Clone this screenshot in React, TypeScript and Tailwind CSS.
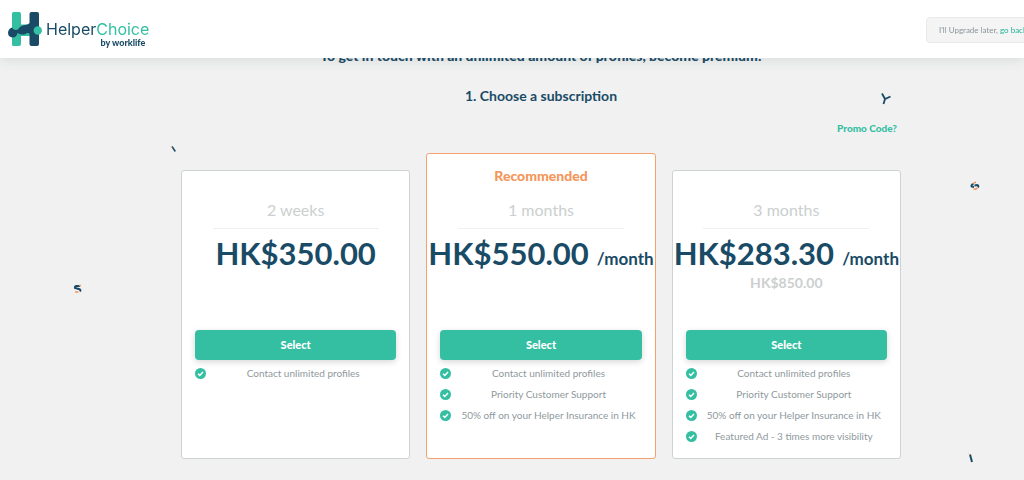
import clsx from 'clsx';

type Plan = {
  id: string;
  duration: string;
  price: string;
  monthly?: boolean;
  total?: string;
  recommended?: boolean;
  features: string[];
};

const plans: Plan[] = [
  {
    id: '2w',
    duration: '2 weeks',
    price: 'HK$350.00',
    features: ['Contact unlimited profiles'],
  },
  {
    id: '1m',
    duration: '1 months',
    price: 'HK$550.00',
    monthly: true,
    recommended: true,
    features: [
      'Contact unlimited profiles',
      'Priority Customer Support',
      '50% off on your Helper Insurance in HK',
    ],
  },
  {
    id: '3m',
    duration: '3 months',
    price: 'HK$283.30',
    monthly: true,
    total: 'HK$850.00',
    features: [
      'Contact unlimited profiles',
      'Priority Customer Support',
      '50% off on your Helper Insurance in HK',
      'Featured Ad - 3 times more visibility',
    ],
  },
];

export default function App() {
  return (
    <div className="relative min-h-screen overflow-hidden bg-[#f1f1f1] font-['Lato','Open_Sans',sans-serif] text-[#1a4b66]">
      <Header />

      <main className="flex flex-col items-center pt-[46px] pb-5 pl-[58px]">
        <h1 className="text-sm leading-5 font-black">
          To get in touch with an unlimited amount of profiles, become premium!
        </h1>
        <h2 className="mt-5 text-sm leading-5 font-bold">1. Choose a subscription</h2>

        <div className="flex w-full max-w-[720px] flex-col">
          <a href="#promo" className="mt-3.5 mr-1 self-end text-[10px] leading-4 font-black text-[#34bfa3]">
            Promo Code?
          </a>
          <div className="mt-[17px] grid grid-cols-3 items-end gap-4">
            {plans.map((plan) => (
              <PlanCard key={plan.id} plan={plan} />
            ))}
          </div>
        </div>
      </main>

      <Confetti />
    </div>
  );
}

function Header() {
  return (
    <header className="fixed inset-x-0 top-0 z-10 flex h-[58px] items-center justify-between overflow-x-clip bg-white pl-2 shadow-[0_2px_12px_rgba(40,70,70,0.12)]">
      <a href="#home" className="flex items-center gap-1">
        <LogoMark />
        <span className="flex flex-col items-end pt-2">
          <span className="font-['Inter',sans-serif] text-base leading-5">
            Helper<span className="text-[#34bfa3]">Choice</span>
          </span>
          <span className="pr-1 text-[9px] leading-2 font-black">by worklife</span>
        </span>
      </a>
      <div className="mt-0.5 -mr-4 rounded-sm border border-[#e9e9e9] bg-[#f4f4f4] px-3 py-1 text-[8px] leading-4 whitespace-nowrap text-[#8a9499]">
        I'll Upgrade later,{' '}
        <a href="#back" className="text-[#1fb396]">
          go back
        </a>
      </div>
    </header>
  );
}

function PlanCard({ plan }: { plan: Plan }) {
  return (
    <section
      className={clsx(
        'flex flex-col items-center rounded-[3px] border bg-white pb-[11px]',
        plan.recommended ? 'border-[#f4a26c]' : 'border-[#cdd2d2]',
      )}
    >
      {plan.recommended && (
        <p className="-mb-[15px] pt-3 text-sm leading-5 font-black text-[#f5965a]">Recommended</p>
      )}
      <h3 className="w-[166px] border-b border-[#f0f0f0] pt-[27px] pb-1.5 text-center text-base leading-6 text-[#cbcfcf]">
        {plan.duration}
      </h3>
      <p className="mt-1 h-10 text-[31px] leading-10 font-bold whitespace-nowrap">
        {plan.price}
        {plan.monthly && <span className="ml-1 text-[17px] leading-none"> /month</span>}
      </p>
      <p className="h-5 text-sm leading-5 font-bold text-[#cbcfcf]">{plan.total}</p>

      <div className="mt-[37px] w-full px-[13px]">
        <button
          type="button"
          className="block h-[30px] w-full rounded-sm bg-[#34bfa3] text-[11px] font-black text-white shadow-[0_2px_6px_rgba(0,0,0,0.16)]"
        >
          Select
        </button>
        <ul className="mt-[3px] h-[84px]">
          {plan.features.map((feature) => (
            <li key={feature} className="flex h-[21px] items-center gap-1">
              <CheckIcon />
              <span className="flex-1 text-center text-[10px] whitespace-nowrap text-[#8f999d]">{feature}</span>
            </li>
          ))}
        </ul>
      </div>
    </section>
  );
}

// Loose pieces scattered over the page background
function Confetti() {
  return (
    <div aria-hidden="true" className="pointer-events-none">
      <svg className="absolute top-[92px] left-[880px]" width="12" height="13" viewBox="0 0 12 13" fill="none" stroke="#1a4b66" strokeWidth="1.8">
        <path d="M2 1.5 5 7l5.500-2.500M5 7 3.500 12" />
      </svg>
      <svg className="absolute top-[145px] left-[170px]" width="7" height="8" viewBox="0 0 7 8" fill="none">
        <path d="M2 1.500 5.300 6.500" stroke="#1a4b66" strokeWidth="1.500" />
        <path d="M1 1.500 2 3" stroke="#f5a873" />
      </svg>
      <svg className="absolute top-[284px] left-[73px]" width="9" height="10" viewBox="0 0 9 10" fill="none" strokeWidth="2">
        <path d="M7 2H3.500Q1.500 2.200 2 4L6.500 5.200Q8 6 7 7.500" stroke="#1a4b66" />
        <path d="M2 8H5.500M6 1.500h2" stroke="#f5965a" strokeWidth="1.500" />
      </svg>
      <svg className="absolute top-[181px] left-[970px]" width="10" height="10" viewBox="0 0 10 10" fill="none" strokeWidth="1.800">
        <path d="M3.500 2.800Q1 3.500 1.500 5.500L4 6M4.500 4.500l3-.500Q9 4.500 8 6.500" stroke="#1a4b66" />
        <path d="M3.500 2 6 1.200M3.500 8l2 .200L7.500 7" stroke="#f5965a" strokeWidth="1.500" />
      </svg>
      <svg className="absolute top-[452px] left-[967px]" width="7" height="11" viewBox="0 0 7 11" fill="none">
        <path d="M3 2.500 5 10" stroke="#1a4b66" strokeWidth="2" />
        <path d="M1.500 1.500 3 3" stroke="#f5a873" />
      </svg>
    </div>
  );
}

function LogoMark() {
  return (
    <svg width="34" height="34" viewBox="0 0 34 34" aria-hidden="true">
      <path fill="#34bfa3" d="M5.500 0H11q2 0 2 2v10.500h9V24h-9v8q0 2-2 2H5.500q-1.500 0-1.500-1.500v-31Q4 0 5.500 0z" />
      <path
        fill="#1a4b66"
        d="M23.500 0H29q2 0 2 2v30q0 2-2 2h-5.500q-2 0-2-2V21.500q-2-1-4 .500-4 1.500-8-1-1 4.500-5 4.500-4.500-.500-4.500-5 .500-4 4-5 1.500 3.500 6 2 2-4 7-4.500 3 0 4.500-2V2q0-2 2-2z"
      />
      <circle cx="29.800" cy="18.500" r="4.200" fill="#34bfa3" />
    </svg>
  );
}

function CheckIcon() {
  return (
    <svg width="11" height="11" viewBox="0 0 11 11" aria-hidden="true" className="shrink-0">
      <circle cx="5.500" cy="5.500" r="5.500" fill="#34bfa3" />
      <path d="M3 5.700 4.800 7.400 8 4" fill="none" stroke="#fff" strokeWidth="1.500" />
    </svg>
  );
}
